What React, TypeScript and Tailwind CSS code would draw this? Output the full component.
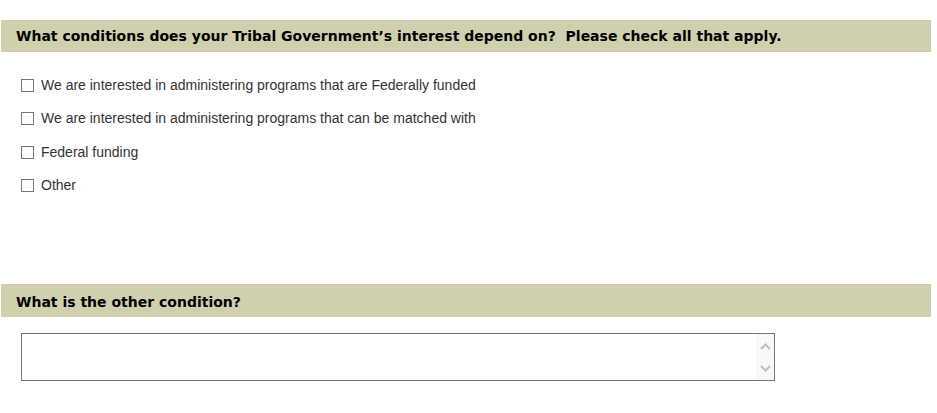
const options = [
  "We are interested in administering programs that are Federally funded",
  "We are interested in administering programs that can be matched with",
  "Federal funding",
  "Other",
];

function SectionBar({ title, className = "" }: { title: string; className?: string }) {
  return (
    <div className={`flex w-[930px] items-center bg-[#d0d0ae] pl-[15px] ${className}`}>
      <h2 className="whitespace-pre font-['DejaVu_Sans',Verdana,sans-serif] text-[14px] font-bold text-black">
        {title}
      </h2>
    </div>
  );
}

export default function App() {
  return (
    <main className="min-h-[413px] bg-white pl-px pt-[20px] font-['Liberation_Sans',Arial,sans-serif]">
      <SectionBar
        className="h-[32px]"
        title="What conditions does your Tribal Government’s interest depend on?  Please check all that apply."
      />

      <ul className="mt-[23px] flex flex-col gap-[13.5px] pl-[20px]">
        {options.map((label) => (
          <li key={label} className="flex h-[20px] items-center gap-[7px]">
            <span className="h-[13px] w-[13px] border border-[#767676] bg-white" />
            <span className="text-[14px] text-[#333333]">{label}</span>
          </li>
        ))}
      </ul>

      <div className="mt-[88px]">
        <SectionBar className="h-[33px] pt-[5px]" title="What is the other condition?" />
      </div>

      <div className="ml-[20px] mt-[16px] flex h-[48px] w-[754px] border border-[#767676] bg-white">
        <div className="flex-1" />
        <div className="flex w-[18px] flex-col items-center justify-between bg-[#f8f8f8] pb-[8px] pt-[9px]">
          <svg width="11" height="7" viewBox="0 0 11 7" fill="none">
            <path d="M1 6 L5.5 1.5 L10 6" stroke="#bdbdbd" strokeWidth="2" />
          </svg>
          <svg width="11" height="7" viewBox="0 0 11 7" fill="none">
            <path d="M1 1 L5.5 5.5 L10 1" stroke="#bdbdbd" strokeWidth="2" />
          </svg>
        </div>
      </div>
    </main>
  );
}
